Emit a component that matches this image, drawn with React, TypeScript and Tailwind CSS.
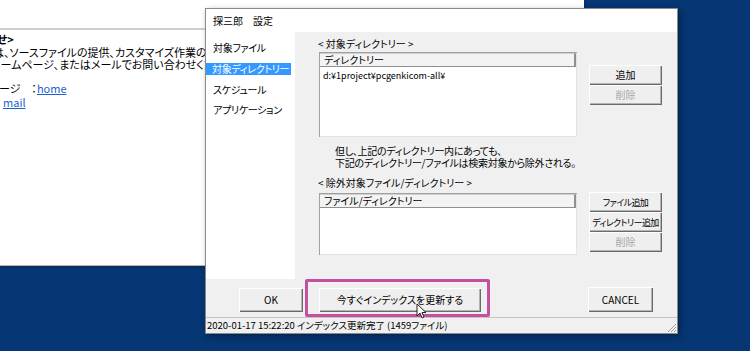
import React from "react";

const FONT = {
  fontFamily: '"Noto Sans CJK JP", "Noto Sans", sans-serif',
};

const btn =
  "flex items-center justify-center whitespace-nowrap bg-[#efefef] leading-none shadow-[inset_1px_1px_0_#ffffff,inset_-1px_-1px_0_#6a6a6a,inset_-2px_-2px_0_#b4b4b4]";

function SideButton({ label, disabled, small }: { label: string; disabled?: boolean; small?: boolean }) {
  return (
    <div
      className={`${btn} h-[20px] w-[73px] ${disabled ? "text-[#a8a8a8]" : "text-black"} ${
        small ? "text-[9px] tracking-[-0.6px]" : "text-[10px]"
      }`}
    >
      {label}
    </div>
  );
}

function ListBox({ header, rows, height }: { header: string; rows: string[]; height: string }) {
  return (
    <div className={`${height} w-[258px] bg-white border-t border-l border-[#a0a0a0] shadow-[inset_-1px_-1px_0_#e3e3e3]`}>
      <div className="h-[14px] w-[256px] bg-[#f3f3f3] border-b border-r-2 border-[#8f8f8f] border-t border-t-[#cfcfcf] flex items-center pl-[4px] text-[10px] leading-none text-black whitespace-nowrap">
        {header}
      </div>
      {rows.map((r) => (
        <div key={r} className="pl-[3px] pt-[2px] text-[9px] leading-[13px] text-black whitespace-nowrap">
          {r}
        </div>
      ))}
    </div>
  );
}

function Cursor() {
  return (
    <svg width="11" height="17" viewBox="0 0 11 17" className="absolute left-[416px] top-[303px]">
      <path d="M1 1 L1 13 L4 10 L6 15 L8 14 L6 9.5 L10 9.5 Z" fill="#fff" stroke="#222" strokeWidth="1" strokeLinejoin="round" />
    </svg>
  );
}

export default function App() {
  return (
    <div
      className="relative w-[750px] h-[351px] overflow-hidden bg-[#063673] [font-feature-settings:'palt']"
      style={FONT}
    >
      {/* background browser window */}
      <div className="absolute left-0 top-0 w-[584px] h-[266px] overflow-hidden bg-white border-b border-[#b8b8b8] shadow-[0_1px_3px_rgba(0,0,0,0.3)]">
        <div className="h-[30px] border-b-2 border-[#cfcfcf]" />
        <div className="w-[205px] overflow-hidden pt-[3px] text-[11px] leading-[12.5px] text-black whitespace-nowrap">
          <div className="font-bold -ml-[3px]">せ&gt;</div>
          <div className="-ml-[7px]">は、ソースファイルの提供、カスタマイズ作業の請負</div>
          <div className="-ml-[10px]">ホームページ、またはメールでお問い合わせください</div>
          <div className="mt-[10px] leading-[14px] -ml-[1px]">
            ージ　：<span className="text-[#1a5fd0] underline">home</span>
          </div>
          <div className="leading-[14px] pl-[3px]">
            <span className="text-[#1a5fd0] underline">mail</span>
          </div>
        </div>
      </div>

      {/* settings dialog */}
      <div className="absolute left-[205px] top-[8px] w-[473px] h-[326px] flex flex-col bg-[#f0f0f0] border border-[#8a8a8a] shadow-[2px_2px_6px_rgba(0,0,0,0.35)]">
        <div className="h-[23px] bg-white flex items-center pl-[7px] text-[10px] text-black whitespace-nowrap">探三郎　設定</div>

        <div className="h-[247px] flex">
          {/* sidebar */}
          <div className="w-[89px] bg-white pt-[5px] flex flex-col text-[10px] leading-none text-black whitespace-nowrap tracking-[-0.3px]">
            <div className="h-[21px] flex items-center pl-[7px]">対象ファイル</div>
            <div className="h-[21px] flex items-center">
              <div className="h-[12px] w-[85px] bg-[#3399ff] text-white flex items-center pl-[6px]">
                対象ディレクトリー
              </div>
            </div>
            <div className="h-[21px] flex items-center pl-[7px]">スケジュール</div>
            <div className="h-[20px] flex items-center pl-[7px]">アプリケーション</div>
          </div>

          {/* content */}
          <div className="flex-1 pl-[24px] pt-[5px] text-[10px] text-black whitespace-nowrap">
            <div className="h-[15px] leading-[14px] -ml-[1px]">&lt; 対象ディレクトリー &gt;</div>
            <div className="flex gap-[12px]">
              <ListBox header="ディレクトリー" rows={["d:¥1project¥pcgenkicom-all¥"]} height="h-[85px]" />
              <div className="pt-[13px] flex flex-col">
                <SideButton label="追加" />
                <SideButton label="削除" disabled />
              </div>
            </div>
            <div className="pl-[16px] pt-[8px] leading-[12px] tracking-[-0.3px]">
              <div>但し、上記のディレクトリー内にあっても、</div>
              <div>下記のディレクトリー/ファイルは検索対象から除外される。</div>
            </div>
            <div className="h-[15px] mt-[7px] leading-[14px] -ml-[1px]">&lt; 除外対象ファイル/ディレクトリー &gt;</div>
            <div className="flex gap-[12px] mt-[2px]">
              <ListBox header="ファイル/ディレクトリー" rows={[]} height="h-[62px]" />
              <div className="-mt-[1px] flex flex-col">
                <SideButton label="ファイル追加" small />
                <SideButton label="ディレクトリー追加" small />
                <SideButton label="削除" disabled />
              </div>
            </div>
          </div>
        </div>

        {/* bottom buttons */}
        <div className="h-[38px] flex items-start pt-[9px] pl-[33px] pr-[24px] text-[10px]">
          <div className={`${btn} w-[64px] h-[24px]`}>OK</div>
          <div className={`${btn} ml-[16px] w-[162px] h-[24px]`}>今すぐインデックスを更新する</div>
          <div className={`${btn} ml-auto -mt-[1px] w-[65px] h-[25px]`}>CANCEL</div>
        </div>

        {/* status bar */}
        <div className="relative flex-1 border-t border-[#c4c4c4] flex items-center pl-[1px] text-[9.5px] text-black leading-none whitespace-nowrap">
          2020-01-17 15:22:20 インデックス更新完了 (1459ファイル)
          <svg width="11" height="11" viewBox="0 0 11 11" className="absolute right-0 bottom-0">
            <path d="M10 2 L2 10 M10 5 L5 10 M10 8 L8 10" stroke="#a0a0a0" strokeWidth="1" />
          </svg>
        </div>
      </div>

      {/* highlight annotation */}
      <div className="absolute left-[305px] top-[279px] w-[185px] h-[38px] border-[3px] border-[#c3519f] rounded-[2px]" />
      <Cursor />
    </div>
  );
}
